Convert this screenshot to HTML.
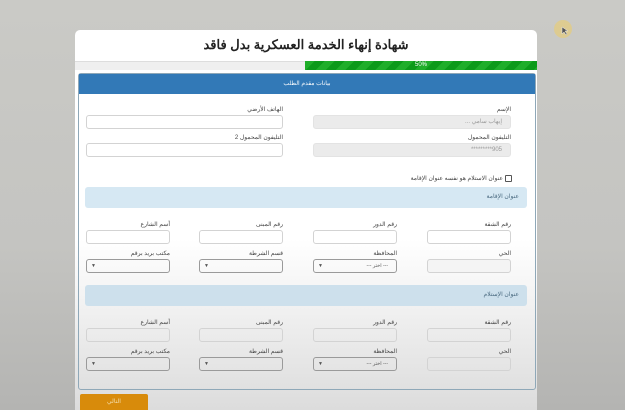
<!DOCTYPE html>
<html style="overflow:hidden;width:625px;height:410px"><head><meta charset="utf-8"><style>
*{margin:0;padding:0;box-sizing:border-box}
body{width:625px;height:410px;overflow:hidden;background:linear-gradient(180deg,#cacac6 0%,#c4c4c1 60%,#b4b4b2 100%);font-family:"Liberation Sans","Noto Sans CJK SC",sans-serif;position:relative}
.a{position:absolute}
.card{left:75px;top:30px;width:462px;height:380px;background:linear-gradient(180deg,#fff 0%,#fff 55%,#dcdcdc 100%);border-radius:5px 5px 0 0}
.title{left:75px;top:37px;width:462px;text-align:center;font-size:13px;font-weight:bold;color:#222;direction:rtl}
.prog{left:75px;top:61px;width:462px;height:9px;background:#efefef;border-top:1px solid #ddd}
.bar{left:305px;top:61px;width:232px;height:9px;background:repeating-linear-gradient(135deg,#1fae2a 0 7px,#0c9a1a 7px 14px);color:#fff;font-size:6px;text-align:center;line-height:9px}
.panel{left:78px;top:73px;width:458px;height:317px;border:1px solid #8fa8b8;border-radius:3px}
.hdr{left:79px;top:74px;width:456px;height:20px;background:#3279b7;color:#fff;font-size:6px;text-align:center;line-height:20px;direction:rtl}
.lbl{font-size:6px;color:#444;direction:rtl;text-align:right}
.in{border:1px solid #d3d3d3;border-radius:3px;background:#fff;height:14px}
.dis{background:#ebebeb;border-color:#e3e3e3;color:#999;font-size:6px;text-align:right;padding-right:8px;line-height:12px}
.sel{border:1px solid #9a9a9a;border-radius:3px;background:transparent;height:14px;font-size:5px;color:#555}
.sec{left:85px;width:442px;height:21px;background:#d6e8f3;border-radius:3px;font-size:6px;color:#4a6a80;text-align:right;padding-right:8px;line-height:21px;direction:rtl}
.btn{left:80px;top:394px;width:68px;height:16px;background:#d88b0b;border-radius:2px 2px 0 0;color:#f4dfb0;font-size:6px;text-align:center;line-height:16px}
</style></head><body>
<div class="a card"></div>
<div class="a title">شهادة إنهاء الخدمة العسكرية بدل فاقد</div>
<div class="a prog"></div>
<div class="a bar">50%</div>
<div class="a panel"></div>
<div class="a hdr">بيانات مقدم الطلب</div>

<div class="a lbl" style="left:313px;top:106px;width:198px">الإسم</div>
<div class="a in dis" style="left:313px;top:115px;width:198px">... إيهاب سامي</div>
<div class="a lbl" style="left:86px;top:106px;width:197px">الهاتف الأرضي</div>
<div class="a in" style="left:86px;top:115px;width:197px"></div>
<div class="a lbl" style="left:313px;top:134px;width:198px">التليفون المحمول</div>
<div class="a in dis" style="left:313px;top:143px;width:198px">*********905</div>
<div class="a lbl" style="left:86px;top:134px;width:197px">التليفون المحمول 2</div>
<div class="a in" style="left:86px;top:143px;width:197px"></div>

<div class="a lbl" style="left:300px;top:175px;width:203px">عنوان الاستلام هو نفسه عنوان الإقامة</div>
<div class="a" style="left:505px;top:175px;width:7px;height:7px;border:1px solid #555;border-radius:1px;background:#fff"></div>

<div class="a sec" style="top:187px">عنوان الإقامة</div>

<div class="a lbl" style="left:427px;top:221px;width:84px">رقم الشقة</div>
<div class="a lbl" style="left:313px;top:221px;width:84px">رقم الدور</div>
<div class="a lbl" style="left:199px;top:221px;width:84px">رقم المبنى</div>
<div class="a lbl" style="left:86px;top:221px;width:84px">أسم الشارع</div>
<div class="a in" style="left:427px;top:230px;width:84px"></div>
<div class="a in" style="left:313px;top:230px;width:84px"></div>
<div class="a in" style="left:199px;top:230px;width:84px"></div>
<div class="a in" style="left:86px;top:230px;width:84px"></div>
<div class="a lbl" style="left:427px;top:250px;width:84px">الحي</div>
<div class="a lbl" style="left:313px;top:250px;width:84px">المحافظة</div>
<div class="a lbl" style="left:199px;top:250px;width:84px">قسم الشرطة</div>
<div class="a lbl" style="left:86px;top:250px;width:84px">مكتب بريد برقم</div>
<div class="a in" style="left:427px;top:259px;width:84px;background:#f4f4f4"></div>
<div class="a sel" style="left:313px;top:259px;width:84px"><span style="position:absolute;left:4px;top:3px">▼</span><span style="position:absolute;right:8px;top:3px">--- اختر ---</span></div>
<div class="a sel" style="left:199px;top:259px;width:84px"><span style="position:absolute;left:4px;top:3px">▼</span></div>
<div class="a sel" style="left:86px;top:259px;width:84px"><span style="position:absolute;left:4px;top:3px">▼</span></div>

<div class="a sec" style="top:285px;background:#cde0ec">عنوان الإستلام</div>

<div class="a lbl" style="left:427px;top:319px;width:84px">رقم الشقة</div>
<div class="a lbl" style="left:313px;top:319px;width:84px">رقم الدور</div>
<div class="a lbl" style="left:199px;top:319px;width:84px">رقم المبنى</div>
<div class="a lbl" style="left:86px;top:319px;width:84px">أسم الشارع</div>
<div class="a in" style="left:427px;top:328px;width:84px;background:transparent"></div>
<div class="a in" style="left:313px;top:328px;width:84px;background:transparent"></div>
<div class="a in" style="left:199px;top:328px;width:84px;background:transparent"></div>
<div class="a in" style="left:86px;top:328px;width:84px;background:transparent"></div>
<div class="a lbl" style="left:427px;top:348px;width:84px">الحي</div>
<div class="a lbl" style="left:313px;top:348px;width:84px">المحافظة</div>
<div class="a lbl" style="left:199px;top:348px;width:84px">قسم الشرطة</div>
<div class="a lbl" style="left:86px;top:348px;width:84px">مكتب بريد برقم</div>
<div class="a in" style="left:427px;top:357px;width:84px;background:transparent"></div>
<div class="a sel" style="left:313px;top:357px;width:84px"><span style="position:absolute;left:4px;top:3px">▼</span><span style="position:absolute;right:8px;top:3px">--- اختر ---</span></div>
<div class="a sel" style="left:199px;top:357px;width:84px"><span style="position:absolute;left:4px;top:3px">▼</span></div>
<div class="a sel" style="left:86px;top:357px;width:84px"><span style="position:absolute;left:4px;top:3px">▼</span></div>

<div class="a btn">التالي</div>
<div class="a" style="left:554px;top:20px;width:18px;height:18px;border-radius:50%;background:rgba(235,205,110,.6)"></div>
<svg class="a" style="left:561px;top:26px" width="8" height="10"><path d="M1 1 L1 8 L3 6 L5 9 L6 8 L4 5 L7 5 Z" fill="#555" stroke="#eee" stroke-width=".5"/></svg>
</body></html>
